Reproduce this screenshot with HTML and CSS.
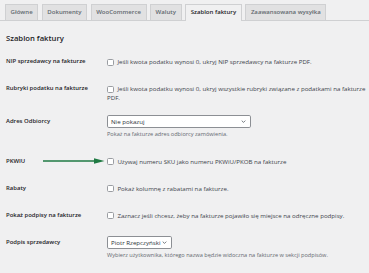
FILE: index.html
```html
<!DOCTYPE html>
<html lang="pl">
<head>
<meta charset="utf-8">
<title>Szablon faktury</title>
<link rel="stylesheet" href="styles.css">
</head>
<body>
<div class="wrap">
  <nav class="tabs">
    <a class="tab">Główne</a>
    <a class="tab">Dokumenty</a>
    <a class="tab">WooCommerce</a>
    <a class="tab">Waluty</a>
    <a class="tab tab--active">Szablon faktury</a>
    <a class="tab">Zaawansowana wysyłka</a>
  </nav>
  <div class="content">
    <h2 class="title">Szablon faktury</h2>
    <div class="rows">
      <div class="row">
        <div class="label">NIP sprzedawcy na fakturze</div>
        <div class="field"><span class="check"></span>Jeśli kwota podatku wynosi 0, ukryj NIP sprzedawcy na fakturze PDF.</div>
      </div>
      <div class="row">
        <div class="label">Rubryki podatku na fakturze</div>
        <div class="field"><span class="check"></span>Jeśli kwota podatku wynosi 0, ukryj wszystkie rubryki związane z podatkami na fakturze<br>PDF.</div>
      </div>
      <div class="row row--select row--first-select">
        <div class="label">Adres Odbiorcy</div>
        <div class="field">
          <div class="select select--wide"><span>Nie pokazuj</span><svg class="chev" viewBox="0 0 8 5" width="5" height="3"><path d="M1 1l3 3 3-3" fill="none" stroke="#50575e" stroke-width="1.3"/></svg></div>
          <p class="desc">Pokaż na fakturze adres odbiorcy zamówienia.</p>
        </div>
      </div>
      <div class="row row--arrow">
        <div class="label">PKWIU</div>
        <svg class="arrow" viewBox="0 0 63 8" width="63" height="8"><path d="M1 4H54" stroke="#1f7a43" stroke-width="1.7"/><path d="M52 1.2L62.5 4L52 6.8Z" fill="#1f7a43"/></svg>
        <div class="field"><span class="check"></span>Używaj numeru SKU jako numeru PKWiU/PKOB na fakturze</div>
      </div>
      <div class="row">
        <div class="label">Rabaty</div>
        <div class="field"><span class="check"></span>Pokaż kolumnę z rabatami na fakturze.</div>
      </div>
      <div class="row">
        <div class="label">Pokaż podpisy na fakturze</div>
        <div class="field"><span class="check"></span>Zaznacz jeśli chcesz, żeby na fakturze pojawiło się miejsce na odręczne podpisy.</div>
      </div>
      <div class="row row--select row--last-select">
        <div class="label">Podpis sprzedawcy</div>
        <div class="field">
          <div class="select select--narrow"><span>Piotr Rzepczyński</span><svg class="chev" viewBox="0 0 8 5" width="5" height="3"><path d="M1 1l3 3 3-3" fill="none" stroke="#50575e" stroke-width="1.3"/></svg></div>
          <p class="desc">Wybierz użytkownika, którego nazwa będzie widoczna na fakturze w sekcji podpisów.</p>
        </div>
      </div>
    </div>
  </div>
</div>
</body>
</html>
```

FILE: styles.css
```css
html, body {
  margin: 0;
  padding: 0;
  background: #f0f0f1;
}
body {
  font-family: "Open Sans", "Noto Sans", "Liberation Sans", sans-serif;
  font-size: 6.15px;
  color: #3c434a;
  width: 369px;
  height: 273px;
  overflow: hidden;
}
.wrap {
  padding-top: 4px;
}
.tabs {
  display: flex;
  gap: 3.5px;
  padding-left: 5px;
  border-bottom: 1px solid #cfd0d2;
  height: 16px;
}
.tab {
  display: block;
  box-sizing: border-box;
  height: 16px;
  padding: 2px 4.6px;
  line-height: 10px;
  border: 1px solid #cfd0d2;
  border-bottom: none;
  background: #e1e1e2;
  color: #62696f;
  font-size: 6.05px;
  font-weight: 600;
  white-space: nowrap;
}
.tab--active {
  background: #f0f0f1;
  color: #1d2327;
  height: 17px;
}
.content {
  padding-left: 6px;
}
.title {
  margin: 12.5px 0 5.5px;
  font-size: 7.7px;
  line-height: 9px;
  font-weight: 600;
  color: #1d2327;
}
.row {
  display: flex;
  position: relative;
  padding: 9px 0;
}
.label {
  width: 101px;
  flex: none;
  font-size: 5.95px;
  line-height: 9px;
  font-weight: 600;
  color: #1d2327;
}
.field {
  line-height: 9px;
  color: #3c434a;
}
.check {
  display: inline-block;
  box-sizing: border-box;
  width: 7px;
  height: 7px;
  border: 1px solid #9a9da2;
  border-radius: 1.6px;
  background: #fff;
  vertical-align: -1.6px;
  margin-right: 3.4px;
}
.row--first-select {
  padding: 4px 0 8.5px;
}
.row--last-select {
  padding: 7.5px 0 8px;
}
.row--select .label {
  line-height: 13px;
}
.select {
  display: flex;
  align-items: center;
  justify-content: space-between;
  box-sizing: border-box;
  height: 13px;
  border: 1px solid #8c8f94;
  border-radius: 1.8px;
  background: #fff;
  padding: 0 4px 0 3px;
  color: #2c3338;
}
.select--wide {
  width: 144px;
}
.select--narrow {
  width: 65px;
}
.chev {
  display: block;
}
.desc {
  margin: 2px 0 0;
  font-size: 5.6px;
  line-height: 9px;
  color: #646970;
}
.arrow {
  position: absolute;
  left: 36px;
  top: 9.5px;
}
```
